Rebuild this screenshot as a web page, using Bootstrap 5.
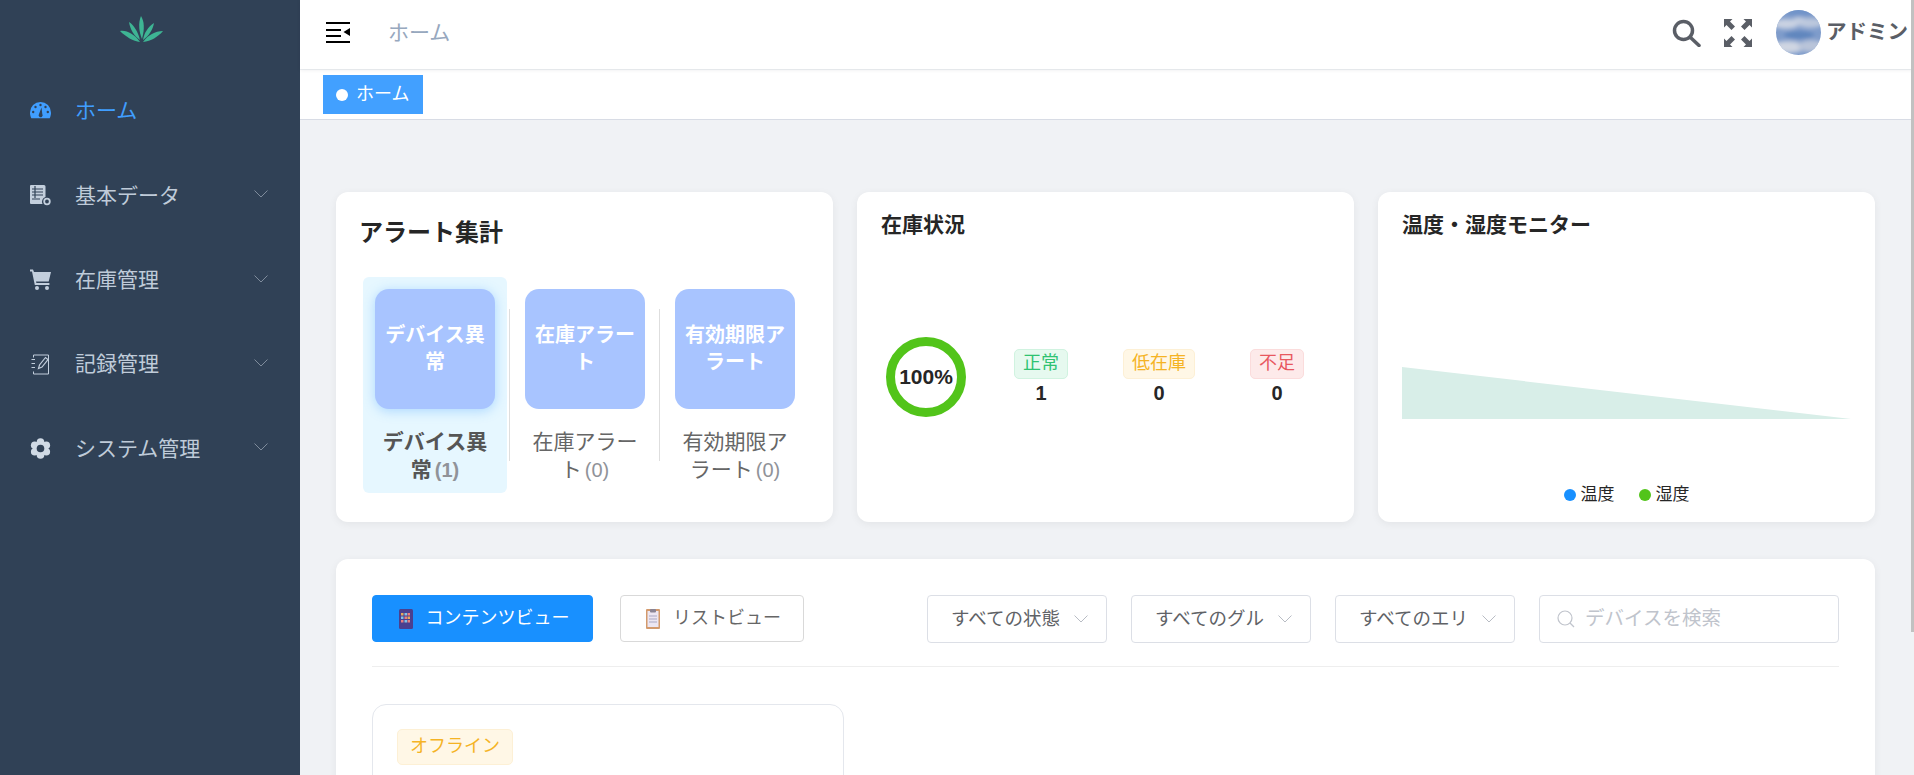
<!DOCTYPE html>
<html lang="ja">
<head>
<meta charset="utf-8">
<title>ホーム</title>
<link href="https://cdn.jsdelivr.net/npm/bootstrap@5.3.0/dist/css/bootstrap.min.css" rel="stylesheet">
<style>
html,body{height:100%;overflow:hidden}
body{font-family:"Liberation Sans","Noto Sans CJK JP",sans-serif;background:#f0f2f5;color:#303133}
.side{width:300px;background:#304156;flex:none;height:775px}
.logo-box{height:69px;padding:15px 0 0 120px}
.side-link{height:84.300px;padding:0 0 0 30px;color:#bfcbd9;font-size:21px}
.side-link.on{color:#409eff}
.side-ico{width:21px;height:21px;margin-right:24px;flex:none}
.side-arrow{margin-left:auto;margin-right:32px;margin-top:-2px}
.main-col{min-width:0;height:775px}
.topbar{height:69px;flex:none;background:#fff;box-shadow:0 1px 4px rgba(0,21,41,.08);padding:0 0 4px 26px;position:relative;z-index:2}
.crumb{color:#97a8be;font-size:21px;margin-left:38px}
.top-tools{gap:21px}
.top-find{margin-right:2px}
.top-ava{margin-left:3px}
.top-name{font-size:20.500px;font-weight:700;color:#5a5e66;margin-left:5px;width:88px;white-space:nowrap;overflow:hidden}
.tagbar{height:50px;flex:none;margin-top:1px;background:#fff;border-bottom:1px solid #d8dce5;padding:5px 0 0 23px}
.tag-on{height:39px;width:100px;background:#42a0ff;color:#fff;font-size:18px;padding-left:13px}
.tag-dot{width:12px;height:12px;background:#fff;margin-right:8px}
.work{padding:72px 39px 0 36px}
.trio{display:grid;grid-template-columns:repeat(3,1fr);gap:24px;margin-bottom:37px}
.panel{background:#fff;border:0;border-radius:12px;box-shadow:0 2px 8px rgba(0,0,0,.06);height:330px}
.panel-a{padding:24px}
.panel-b{padding:21px 24px}
.title-lg{font-size:24px;font-weight:700;line-height:34px;margin:0 0 27px -1px;color:#262626}
.title-md{font-size:21px;font-weight:700;line-height:24px;margin:0;color:#262626}
.alert-cols{margin:0 3px 0 0}
.alert-col{flex:1 1 0;position:relative;padding:0 3px}
.alert-col.sep::after{content:"";position:absolute;right:0;top:32px;height:152px;width:1px;background:#dedede}
.alert-item{height:216px;padding:12px 12px 0;text-align:center;border-radius:6px;color:#666;font-size:21px;line-height:27.500px}
.alert-item.on{background:#e6f7ff;color:#555;font-weight:700}
.alert-box{width:120px;height:120px;border-radius:14px;background:#a8c4ff;color:#fff;font-size:20px;font-weight:700;line-height:27px;padding:8px;margin-bottom:19px}
.alert-item.on .alert-box{box-shadow:0 2px 12px rgba(64,158,255,.35)}
.alert-label{padding:0 2px}
.cnt{color:#909399;font-weight:inherit;margin-left:3px;font-size:20px}
.stock-row{margin:100px -6px 0 5px}
.ring{width:80px;height:80px;border:9px solid #52c41a;font-size:21px;font-weight:700;color:#262626;margin-right:16px;flex:none}
.stat{width:118px;text-align:center}
.pill{display:inline-block;height:30px;line-height:27px;font-size:18px;padding:0 8px;border-radius:5px;border:1px solid}
.pill-g{background:#e6f9ef;border-color:#d0f3e0;color:#2fc271}
.pill-y{background:#fff7e6;border-color:#fdf0d5;color:#f5b324}
.pill-r{background:#fdeaea;border-color:#fbdcdc;color:#e8585f}
.stat-n{font-size:20px;font-weight:700;line-height:24px;margin-top:2px;color:#262626}
.chart-svg{display:block;width:100%;height:248px;flex:none}
.legend{font-size:17px;line-height:20px;color:#262626;gap:24px}
.leg-dot{width:12px;height:12px;margin-right:5px}
.wide{background:#fff;border:0;border-radius:12px;box-shadow:0 2px 8px rgba(0,0,0,.06);padding:36px;height:400px}
.tools{height:48px;gap:0}
.vbtn{height:47px;font-size:18px;border-radius:4px;padding:0 0 0 3px;display:flex;align-items:center;justify-content:center;gap:13px}
.vbtn-a{width:221px;background:#1890ff;border:1px solid #1890ff;color:#fff}
.vbtn-b{width:184px;background:#fff;border:1px solid #d9d9d9;color:#666;margin-left:27px}
.sel{width:180px;height:48px;border:1px solid #dcdfe6;border-radius:4px;background:#fff;color:#606266;font-size:18.500px;padding:0 18px 0 23px;margin-left:24px;white-space:nowrap}
.sel span{flex:1;overflow:hidden}
.finder{width:300px;height:48px;border:1px solid #dcdfe6;border-radius:4px;background:#fff;margin-left:24px;padding-left:17px}
.finder input{border:0;outline:0;box-shadow:none;font-size:19.500px;padding:0 0 0 10px;color:#606266;background:transparent}
.finder input::placeholder{color:#c0c4cc}
.rule{height:1px;background:#eee;margin:23px 0 37px}
.dev{width:472px;height:200px;border:1px solid #e4e7ed;border-radius:14px;padding:24px}
.off-tag{display:inline-block;height:36px;line-height:33px;font-size:18px;padding:0 12px;background:#fff7e6;border:1px solid #fdf0d5;border-radius:5px;color:#f5b324}
.thumb{position:fixed;top:0;right:0;width:3px;height:632px;background:#c1c1c1;z-index:5}
</style>
</head>
<body class="d-flex">
<aside class="side">
  <div class="logo-box">
    <svg width="44" height="30" viewBox="0 0 44 30" fill="#3eb594">
      <path d="M21 1c3 5 4 12 1 23C19 17 18 8 21 1z"/>
      <path d="M9 7c5 3 9 10 11 18C14 21 10 14 9 7z"/>
      <path d="M34 8c-1 6-5 13-11 17 1-7 5-13 11-17z"/>
      <path d="M0 16c7-1 14 3 20 11C13 26 6 22 0 16z"/>
      <path d="M43 16c-5 6-12 10-20 11 5-7 12-11 20-11z"/>
    </svg>
  </div>
  <nav class="nav flex-column">
    <a class="nav-link side-link on d-flex align-items-center" href="#">
      <svg class="side-ico" viewBox="0 0 21 21"><path fill="#409eff" d="M0 11.500a10.500 10.500 0 0 1 21 0c0 2-.5 4-1.300 5.800H1.300C.5 15.500 0 13.500 0 11.500z"/><g fill="#304156"><circle cx="10.500" cy="4" r="1.200"/><circle cx="5.500" cy="6" r="1.200"/><circle cx="15.500" cy="6" r="1.200"/><circle cx="3.200" cy="11" r="1.200"/><circle cx="17.800" cy="11" r="1.200"/><path d="M11.500 6.500 12.300 13a2 2 0 1 1-3.300 0z"/></g></svg>
      <span>ホーム</span>
    </a>
    <a class="nav-link side-link d-flex align-items-center" href="#">
      <svg class="side-ico" viewBox="0 0 21 21"><path fill="#c3cfdd" d="M1 0h13a1.500 1.500 0 0 1 1.500 1.500V12a5 5 0 0 0-3 7H1a1 1 0 0 1-1-1V1a1 1 0 0 1 1-1z"/><path stroke="#304156" stroke-width="1.200" d="M2 4h11M2 7h11M2 10h11M2 14h8M5 1v12"/><circle cx="17" cy="16.500" r="2.800" fill="none" stroke="#c3cfdd" stroke-width="1.800"/></svg>
      <span>基本データ</span>
      <svg class="side-arrow" width="14" height="8" viewBox="0 0 14 8"><path d="M.5.500 7 7l6.500-6.500" fill="none" stroke="#7f8c9c"/></svg>
    </a>
    <a class="nav-link side-link d-flex align-items-center" href="#">
      <svg class="side-ico" viewBox="0 0 21 21"><path fill="#c3cfdd" d="M0 .5h3l1 2.500h17l-2.300 9.500H6l.4 1.500h13v2H4.800L2 2.500H0z"/><circle cx="7" cy="19" r="2" fill="#c3cfdd"/><circle cx="17" cy="19" r="2" fill="#c3cfdd"/></svg>
      <span>在庫管理</span>
      <svg class="side-arrow" width="14" height="8" viewBox="0 0 14 8"><path d="M.5.500 7 7l6.500-6.500" fill="none" stroke="#7f8c9c"/></svg>
    </a>
    <a class="nav-link side-link d-flex align-items-center" href="#">
      <svg class="side-ico" viewBox="0 0 21 21" fill="none" stroke="#c3cfdd" stroke-width="1"><path d="M3.500 1H18.500V20H3.500M3.500 1v2.500M3.500 17.500V20M1.500 5.500h3.500M1.500 9.500h3.500M1.500 13.500h3.500"/><path d="M8.500 14.500l1-3.500 6-7.500 2.500 2-6 7.500z" stroke-width="1.200"/></svg>
      <span>記録管理</span>
      <svg class="side-arrow" width="14" height="8" viewBox="0 0 14 8"><path d="M.5.500 7 7l6.500-6.500" fill="none" stroke="#7f8c9c"/></svg>
    </a>
    <a class="nav-link side-link d-flex align-items-center" href="#">
      <svg class="side-ico" viewBox="0 0 21 21"><g fill="#d0dae5"><circle cx="10.500" cy="10.500" r="7.500"/><circle cx="10.500" cy="4" r="3.800"/><circle cx="10.500" cy="17" r="3.800"/><circle cx="4.700" cy="7.200" r="3.800"/><circle cx="16.300" cy="7.200" r="3.800"/><circle cx="4.700" cy="13.800" r="3.800"/><circle cx="16.300" cy="13.800" r="3.800"/></g><circle cx="10.500" cy="10.500" r="3.800" fill="#304156"/></svg>
      <span>システム管理</span>
      <svg class="side-arrow" width="14" height="8" viewBox="0 0 14 8"><path d="M.5.500 7 7l6.500-6.500" fill="none" stroke="#7f8c9c"/></svg>
    </a>
  </nav>
</aside>
<div class="main-col flex-grow-1 d-flex flex-column">
  <header class="topbar d-flex align-items-center">
    <svg width="24" height="21" viewBox="0 0 24 21"><path fill="#000" d="M0 0h24v2H0zM0 7h15v2H0zM0 13h15v2H0zM0 19h24v2H0z"/><path fill="#000" d="M24 6v8l-6.500-4z"/></svg>
    <span class="crumb">ホーム</span>
    <div class="ms-auto d-flex align-items-center top-tools">
      <svg class="top-find" width="29" height="28" viewBox="0 0 29 28" fill="none" stroke="#5a5e66" stroke-width="3.500"><circle cx="11.500" cy="11.500" r="9"/><path d="M18 18l9 8.500" stroke-linecap="round"/></svg>
      <svg width="28" height="28" viewBox="0 0 28 28" fill="#5a5e66"><path d="M0 0h8.500L6 2.500l5 5-3.500 3.500-5-5L0 8.500zM28 0v8.500L25.500 6l-5 5L17 7.500l5-5L19.500 0zM0 28v-8.500L2.500 22l5-5 3.500 3.500-5 5L8.500 28zM28 28h-8.500L22 25.500l-5-5 3.500-3.500 5 5 2.500-2.500z"/></svg>
      <div class="d-flex align-items-center top-ava">
      <svg width="45" height="45" viewBox="0 0 45 45">
        <defs><clipPath id="av"><circle cx="22.500" cy="22.500" r="22.500"/></clipPath><filter id="bl"><feGaussianBlur stdDeviation="2"/></filter></defs>
        <g clip-path="url(#av)"><rect width="45" height="45" fill="#7f9ccb"/><g filter="url(#bl)"><ellipse cx="24" cy="2" rx="14" ry="4" fill="#6f93c9"/><ellipse cx="10" cy="14" rx="13" ry="5" fill="#c9d2e2"/><ellipse cx="34" cy="13" rx="13" ry="5" fill="#bcc8dd"/><ellipse cx="23" cy="10" rx="7" ry="3" fill="#c2cde0"/><ellipse cx="23" cy="25" rx="15" ry="4" fill="#5f85bd"/><ellipse cx="12" cy="37" rx="17" ry="6" fill="#cfd5e2"/><ellipse cx="35" cy="36" rx="13" ry="6" fill="#b9c4d9"/></g></g>
      </svg>
      <span class="top-name">アドミン</span>
      </div>
    </div>
  </header>
  <div class="tagbar">
    <div class="tag-on d-flex align-items-center"><span class="tag-dot rounded-circle"></span>ホーム</div>
  </div>
  <main class="work">
    <div class="trio">
      <section class="card panel panel-a">
        <h2 class="title-lg">アラート集計</h2>
        <div class="alert-cols d-flex">
          <div class="alert-col sep"><div class="alert-item on"><div class="alert-box d-flex align-items-center justify-content-center"><span>デバイス異常</span></div><div class="alert-label">デバイス異常<span class="cnt">(1)</span></div></div></div>
          <div class="alert-col sep"><div class="alert-item"><div class="alert-box d-flex align-items-center justify-content-center"><span>在庫アラート</span></div><div class="alert-label">在庫アラート<span class="cnt">(0)</span></div></div></div>
          <div class="alert-col"><div class="alert-item"><div class="alert-box d-flex align-items-center justify-content-center"><span>有効期限アラート</span></div><div class="alert-label">有効期限アラート<span class="cnt">(0)</span></div></div></div>
        </div>
      </section>
      <section class="card panel panel-b">
        <h2 class="title-md">在庫状況</h2>
        <div class="stock-row d-flex align-items-center">
          <div class="ring rounded-circle d-flex align-items-center justify-content-center">100%</div>
          <div class="stat"><span class="pill pill-g">正常</span><div class="stat-n">1</div></div>
          <div class="stat"><span class="pill pill-y">低在庫</span><div class="stat-n">0</div></div>
          <div class="stat"><span class="pill pill-r">不足</span><div class="stat-n">0</div></div>
        </div>
      </section>
      <section class="card panel panel-b">
        <h2 class="title-md">温度・湿度モニター</h2>
        <svg class="chart-svg" viewBox="0 0 449 248" preserveAspectRatio="none"><path d="M0 130 449 182H0z" fill="#d8eee8"/></svg>
        <div class="legend d-flex justify-content-center">
          <div class="d-flex align-items-center"><span class="leg-dot rounded-circle" style="background:#1890ff"></span>温度</div>
          <div class="d-flex align-items-center"><span class="leg-dot rounded-circle" style="background:#52c41a"></span>湿度</div>
        </div>
      </section>
    </div>
    <section class="card wide">
      <div class="tools d-flex">
        <button class="btn vbtn vbtn-a" type="button">
          <svg width="14" height="20" viewBox="0 0 14 20"><rect width="14" height="20" rx="1.500" fill="#4b3f8f"/><g fill="#e8a85a"><rect x="2" y="4" width="2.500" height="2.500"/><rect x="8.500" y="7.500" width="2.500" height="2.500"/></g><g fill="#7fc4e8"><rect x="5.500" y="4" width="2.500" height="2.500"/><rect x="2" y="7.500" width="2.500" height="2.500"/><rect x="5.500" y="11" width="2.500" height="2.500"/></g><g fill="#e87f7f"><rect x="8.500" y="4" width="2.500" height="2.500"/><rect x="5.500" y="7.500" width="2.500" height="2.500"/><rect x="2" y="11" width="2.500" height="2.500"/><rect x="8.500" y="11" width="2.500" height="2.500"/></g></svg>
          コンテンツビュー
        </button>
        <button class="btn vbtn vbtn-b" type="button">
          <svg width="14" height="20" viewBox="0 0 14 20"><rect width="14" height="20" rx="1" fill="#d39a6d"/><rect x="1.500" y="2" width="11" height="16" fill="#ece6f2"/><rect x="4" y="0" width="6" height="3.500" rx="1" fill="#8a8494"/><path d="M3 7h8M3 10h8M3 13h8" stroke="#a9a8c4"/></svg>
          リストビュー
        </button>
        <div class="ms-auto d-flex">
          <div class="sel d-flex align-items-center"><span>すべての状態</span><svg width="14" height="8" viewBox="0 0 14 8"><path d="M.5.500 7 7l6.500-6.500" fill="none" stroke="#b8bcc4"/></svg></div>
          <div class="sel d-flex align-items-center"><span>すべてのグル</span><svg width="14" height="8" viewBox="0 0 14 8"><path d="M.5.500 7 7l6.500-6.500" fill="none" stroke="#b8bcc4"/></svg></div>
          <div class="sel d-flex align-items-center"><span>すべてのエリ</span><svg width="14" height="8" viewBox="0 0 14 8"><path d="M.5.500 7 7l6.500-6.500" fill="none" stroke="#b8bcc4"/></svg></div>
          <div class="finder d-flex align-items-center"><svg width="18" height="18" viewBox="0 0 18 18" fill="none" stroke="#c0c4cc" stroke-width="1.200" class="flex-shrink-0"><circle cx="8" cy="8" r="7"/><path d="M13 13l4 4"/></svg><input class="form-control" type="text" placeholder="デバイスを検索"></div>
        </div>
      </div>
      <div class="rule"></div>
      <div class="dev"><span class="off-tag">オフライン</span></div>
    </section>
  </main>
</div>
<div class="thumb"></div>
<script src="https://cdn.jsdelivr.net/npm/bootstrap@5.3.0/dist/js/bootstrap.bundle.min.js"></script>
</body>
</html>
